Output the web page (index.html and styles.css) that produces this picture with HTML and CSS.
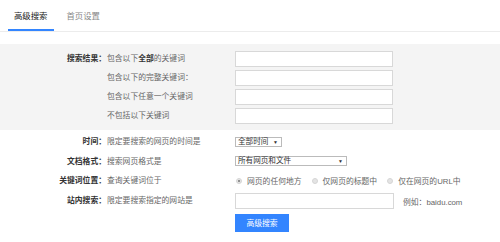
FILE: index.html
```html
<!DOCTYPE html>
<html lang="zh-CN">
<head>
<meta charset="utf-8">
<title>高级搜索</title>
<link rel="stylesheet" href="styles.css">
</head>
<body>
<div class="tabs">
  <span class="tab active">高级搜索</span>
  <span class="tab">首页设置</span>
</div>

<div class="band">
  <div class="grid">
    <div class="label">搜索结果：</div>
    <div class="desc">包含以下<b>全部</b>的关键词</div>
    <div class="ctrl"><span class="input"></span></div>

    <div class="label"></div>
    <div class="desc">包含以下的完整关键词：</div>
    <div class="ctrl"><span class="input"></span></div>

    <div class="label"></div>
    <div class="desc">包含以下任意一个关键词</div>
    <div class="ctrl"><span class="input"></span></div>

    <div class="label"></div>
    <div class="desc">不包括以下关键词</div>
    <div class="ctrl"><span class="input"></span></div>
  </div>
</div>

<div class="grid lower">
  <div class="label">时间：</div>
  <div class="desc">限定要搜索的网页的时间是</div>
  <div class="ctrl"><span class="select sel-time"><span>全部时间</span><span class="arrow">▼</span></span></div>

  <div class="label">文档格式：</div>
  <div class="desc">搜索网页格式是</div>
  <div class="ctrl"><span class="select sel-fmt"><span>所有网页和文件</span><span class="arrow">▼</span></span></div>

  <div class="label">关键词位置：</div>
  <div class="desc">查询关键词位于</div>
  <div class="ctrl radios">
    <span class="opt"><span class="radio checked"></span>网页的任何地方</span>
    <span class="opt"><span class="radio"></span>仅网页的标题中</span>
    <span class="opt"><span class="radio"></span>仅在网页的URL中</span>
  </div>

  <div class="label">站内搜索：</div>
  <div class="desc">限定要搜索指定的网站是</div>
  <div class="ctrl site"><span class="input"></span><span class="example">例如：baidu.com</span></div>

  <div class="label"></div>
  <div class="desc"></div>
  <div class="ctrl btnrow"><span class="btn">高级搜索</span></div>
</div>
</body>
</html>
```

FILE: styles.css
```css
html, body {
  margin: 0;
  padding: 0;
  background: #fff;
}
body {
  font-family: "Liberation Sans", "Noto Sans CJK SC", sans-serif;
  font-size: 7.8px;
  color: #666;
  width: 500px;
  height: 242px;
  overflow: hidden;
}
.tabs {
  display: flex;
  height: 31px;
  padding-left: 8px;
  border-bottom: 1px solid #ececec;
}
.tab {
  display: flex;
  align-items: center;
  padding: 0 6px;
  margin-right: 7px;
  font-size: 8.4px;
  color: #888;
  height: 29px;
  border-bottom: 2px solid transparent;
}
.tab.active {
  color: #222;
  border-bottom-color: #3385ff;
}
.band {
  margin-top: 12px;
  background: #f4f4f4;
  padding: 7px 0 3px;
}
.grid {
  display: grid;
  grid-template-columns: 106px 129px 1fr;
  grid-auto-rows: 19px;
}
.label {
  text-align: right;
  font-weight: bold;
  color: #333;
  line-height: 16px;
}
.desc {
  padding-left: 1px;
  line-height: 16px;
  white-space: nowrap;
}
.desc b {
  color: #333;
}
.ctrl {
  display: flex;
  align-items: flex-start;
}
.input {
  display: block;
  box-sizing: border-box;
  width: 158px;
  height: 16px;
  background: #fff;
  border: 1px solid #d8d8d8;
}
.lower {
  padding-top: 2px;
  grid-template-rows: 19.5px 19.5px 19.5px 21px 20px;
}
.lower .label, .lower .desc {
  line-height: 19.5px;
}
.lower .ctrl {
  align-items: center;
}
.select {
  box-sizing: border-box;
  display: flex;
  justify-content: space-between;
  align-items: center;
  height: 10px;
  border: 1px solid #bbb;
  background: #fff;
  color: #333;
  padding: 0 3px 0 2px;
  font-size: 7.6px;
  line-height: 8px;
}
.sel-time { width: 47px; }
.sel-fmt { width: 112px; }
.arrow {
  font-size: 5px;
  color: #333;
}
.radios {
  gap: 0;
}
.opt {
  display: flex;
  align-items: center;
  margin-right: 10px;
  white-space: nowrap;
}
.opt:first-child { margin-left: 1px; }
.radio {
  box-sizing: border-box;
  width: 6px;
  height: 6px;
  border-radius: 50%;
  background: #e4e4e4;
  border: 1px solid #d6d6d6;
  margin-right: 5px;
  display: flex;
  align-items: center;
  justify-content: center;
}
.radio.checked::after {
  content: "";
  width: 2px;
  height: 2px;
  border-radius: 50%;
  background: #777;
}
.site .input {
  width: 159px;
}
.example {
  margin-left: 9px;
}
.btnrow {
  align-items: flex-end !important;
}
.btn {
  display: flex;
  align-items: center;
  justify-content: center;
  width: 54px;
  height: 18px;
  background: #3385ff;
  color: #fff;
  font-size: 7.8px;
}
```
